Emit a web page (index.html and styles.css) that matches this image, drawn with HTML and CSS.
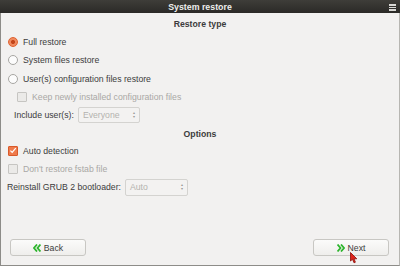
FILE: index.html
```html
<!DOCTYPE html>
<html lang="en">
<head>
    <meta charset="UTF-8">
    <title>System restore</title>
    <link rel="stylesheet" href="styles.css">
</head>
<body>
    <div class="window">
        <div class="titlebar">
            <span class="title">System restore</span>
            <span class="menu-icon"><i></i><i></i><i></i></span>
        </div>

        <div class="content">
            <h2 class="section-title">Restore type</h2>

            <div class="row">
                <span class="radio checked"></span>
                <span>Full restore</span>
            </div>
            <div class="row">
                <span class="radio"></span>
                <span>System files restore</span>
            </div>
            <div class="row">
                <span class="radio"></span>
                <span>User(s) configuration files restore</span>
            </div>
            <div class="row sub disabled">
                <span class="check"></span>
                <span>Keep newly installed configuration files</span>
            </div>
            <div class="row field users">
                <span>Include user(s):</span>
                <span class="combo disabled-combo">Everyone<span class="arrows">&#9652;<br>&#9662;</span></span>
            </div>

            <h2 class="section-title options">Options</h2>

            <div class="row">
                <span class="check checked">
                    <svg width="9" height="9" viewBox="0 0 9 9"><path d="M1.6 4.6 L3.6 6.6 L7.6 1.8" fill="none" stroke="#fff" stroke-width="1.4"/></svg>
                </span>
                <span>Auto detection</span>
            </div>
            <div class="row disabled">
                <span class="check"></span>
                <span>Don't restore fstab file</span>
            </div>
            <div class="row field grub">
                <span>Reinstall GRUB 2 bootloader:</span>
                <span class="combo disabled-combo">Auto<span class="arrows">&#9652;<br>&#9662;</span></span>
            </div>

            <div class="buttons">
                <button class="btn">
                    <svg width="8" height="8" viewBox="0 0 8 8"><path d="M4 0.5 L1 4 L4 7.5 M7.5 0.5 L4.5 4 L7.5 7.5" fill="none" stroke="#2db52d" stroke-width="1.8"/></svg>
                    Back
                </button>
                <button class="btn">
                    <svg width="8" height="8" viewBox="0 0 8 8"><path d="M0.5 0.5 L3.5 4 L0.5 7.5 M4 0.5 L7 4 L4 7.5" fill="none" stroke="#2db52d" stroke-width="1.8"/></svg>
                    Next
                </button>
            </div>
        </div>

        <svg class="cursor" width="8" height="12" viewBox="0 0 8 12"><path d="M0.5 0.5 L0.5 9 L2.5 7.3 L4 10.8 L5.4 10.2 L4 6.8 L6.8 6.8 Z" fill="#e0241b" stroke="#8a0d08" stroke-width="0.8"/></svg>
    </div>
</body>
</html>
```

FILE: styles.css
```css
body {
    margin: 0;
    font-family: "Liberation Sans", Arial, sans-serif;
    font-size: 8.7px;
    color: #3c3c3c;
    background-color: #f2f1f0;
}

.window {
    position: relative;
    width: 400px;
    height: 266px;
    display: flex;
    flex-direction: column;
}

.titlebar {
    height: 13px;
    background: linear-gradient(#3e3d39, #2b2a27);
    display: flex;
    align-items: center;
    justify-content: center;
    position: relative;
}

.title {
    color: #eeeeec;
    font-weight: bold;
    font-size: 8.8px;
}

.menu-icon {
    position: absolute;
    right: 4px;
    top: 4px;
    width: 7px;
    display: flex;
    flex-direction: column;
    gap: 1px;
}

.menu-icon i {
    display: block;
    height: 1.5px;
    background-color: #d8d8d5;
}

.content {
    flex: 1;
    background-color: #f2f1f0;
    border-left: 1px solid #8d8c88;
    border-right: 1px solid #b7b6b2;
    border-bottom: 1px solid #8d8c88;
    display: flex;
    flex-direction: column;
    padding: 0 6px 0 6px;
}

.section-title {
    margin: 0;
    font-size: 8.7px;
    font-weight: bold;
    text-align: center;
    height: 13px;
    line-height: 13px;
    margin-top: 5px;
    margin-bottom: 2px;
    color: #3c3c3c;
}

.section-title.options {
    margin-top: 4px;
    margin-bottom: 0;
}

.row {
    display: flex;
    align-items: center;
    gap: 5px;
    height: 18.3px;
    padding-left: 1px;
}

.row.sub {
    padding-left: 10px;
}

.row.disabled {
    color: #a9a8a5;
}

.row.field {
    gap: 4px;
    padding-left: 7px;
}

.row.grub {
    padding-left: 0;
}

.radio {
    width: 8px;
    height: 8px;
    border-radius: 50%;
    border: 1px solid #a7a6a2;
    background-color: #fcfcfc;
    flex-shrink: 0;
}

.radio.checked {
    border-color: #e0612e;
    background: radial-gradient(circle, #c3451a 0 1.6px, #f08a5f 2.4px);
}

.check {
    width: 8px;
    height: 8px;
    border: 1px solid #c6c5c2;
    border-radius: 1px;
    background-color: #ebeae8;
    flex-shrink: 0;
    display: flex;
    align-items: center;
    justify-content: center;
}

.check.checked {
    border-color: #d95a2a;
    background-color: #ef7b4c;
}

.combo {
    display: flex;
    align-items: center;
    justify-content: space-between;
    height: 14px;
    padding: 0 4px 0 4px;
    border: 1px solid #d4d3d0;
    border-radius: 2px;
    background-color: #f3f2f1;
    box-sizing: border-box;
}

.disabled-combo {
    color: #b3b2af;
}

.users .combo {
    width: 62px;
    height: 16px;
}

.grub .combo {
    width: 63px;
    height: 17px;
}

.arrows {
    font-size: 4px;
    line-height: 4px;
    text-align: center;
    color: #9a9996;
}

.buttons {
    margin-top: auto;
    display: flex;
    justify-content: space-between;
    padding: 0 4px 9px 3px;
}

.btn {
    width: 76px;
    height: 17px;
    display: flex;
    align-items: center;
    justify-content: center;
    gap: 3px;
    font-family: "Liberation Sans", Arial, sans-serif;
    font-size: 8.7px;
    color: #3c3c3c;
    background: linear-gradient(#fbfbfa, #efeeec);
    border: 1px solid #c8c7c3;
    border-radius: 3px;
    padding: 0;
}

.cursor {
    position: absolute;
    left: 350px;
    top: 252px;
}
```
